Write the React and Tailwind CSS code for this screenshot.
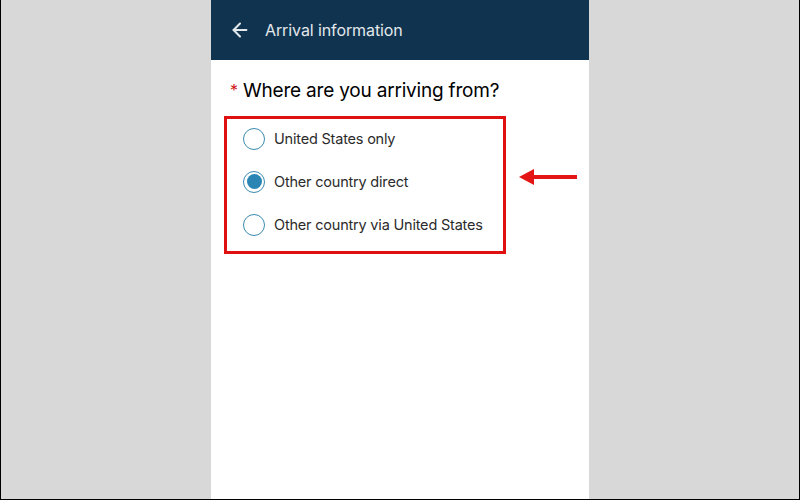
import { ArrowLeft } from "lucide-react";

const options = [
  { label: "United States only", checked: false },
  { label: "Other country direct", checked: true },
  { label: "Other country via United States", checked: false },
];

function Radio({ checked }) {
  return (
    <span className="flex h-[22px] w-[22px] items-center justify-center rounded-full border-[1.5px] border-[#3a8bb0]">
      {checked && <span className="h-[15px] w-[15px] rounded-full bg-[#2a85b5]" />}
    </span>
  );
}

export default function App() {
  return (
    <div
      className="flex h-[500px] w-[800px] justify-center border border-t-0 border-black bg-[#d8d8d8]"
      style={{ fontFamily: "Inter, 'Liberation Sans', sans-serif" }}
    >
      <div className="relative flex w-[378px] flex-col bg-white">
        <div className="flex h-[60px] items-center gap-[14px] bg-[#10344f] pl-[18px] text-[#e3e8ec]">
          <ArrowLeft size={22} strokeWidth={2.2} />
          <span className="text-[16px] tracking-[-0.1px]">Arrival information</span>
        </div>

        <div className="mt-[17px] flex items-start pl-[19px] text-[19px] text-black">
          <span className="mr-[5px] mt-[1px] text-[16px] text-[#d01818]">*</span>
          <span className="tracking-[-0.2px]">Where are you arriving from?</span>
        </div>

        <div className="ml-[13px] mt-[10px] flex w-[282px] flex-col gap-[21px] border-[3px] border-[#e01010] pb-[15px] pl-[16px] pt-[9px]">
          {options.map((o) => (
            <div key={o.label} className="flex items-center gap-[9px] text-[14.5px] tracking-[-0.2px] text-[#2b2b2b]">
              <Radio checked={o.checked} />
              <span>{o.label}</span>
            </div>
          ))}
        </div>

        <svg
          className="absolute left-[308px] top-[167px]"
          width="60"
          height="20"
          viewBox="0 0 60 20"
        >
          <rect x="12" y="8" width="46" height="4" fill="#e31515" />
          <polygon points="0,10 15,2 15,18" fill="#e31515" />
        </svg>
      </div>
    </div>
  );
}
